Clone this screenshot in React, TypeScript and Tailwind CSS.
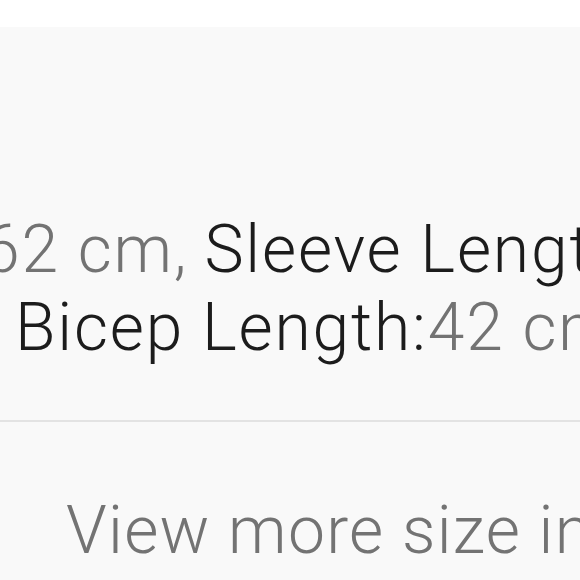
export default function App() {
  return (
    <div className="w-[580px] h-[580px] overflow-hidden bg-white" style={{ fontFamily: "Roboto, 'Noto Sans', sans-serif" }}>
      <div className="h-[27px] bg-white" />
      <div className="h-[553px] bg-[#f9f9f9] flex flex-col">
        <div className="pt-[184px] text-[66px] leading-[78px] tracking-[1.8px] whitespace-nowrap font-[350]">
          <div className="ml-[-17px]">
            <span className="text-[#737373]">62 cm,</span>
            <span className="text-[#737373] tracking-[0px]"> </span>
            <span className="text-[#1c1c1c]">Sleeve Length:</span>
          </div>
          <div className="ml-[15px]">
            <span className="text-[#1c1c1c]">Bicep Length:</span>
            <span className="text-[#737373]">42 cm</span>
          </div>
        </div>
        <div className="mt-[53px] h-[2px] bg-[#e3e3e3]" />
        <div className="mt-[70px] ml-[66px] text-[66px] leading-[78px] tracking-[1.3px] whitespace-nowrap text-[#737373] font-[350]">
          View more size info
        </div>
      </div>
    </div>
  );
}
